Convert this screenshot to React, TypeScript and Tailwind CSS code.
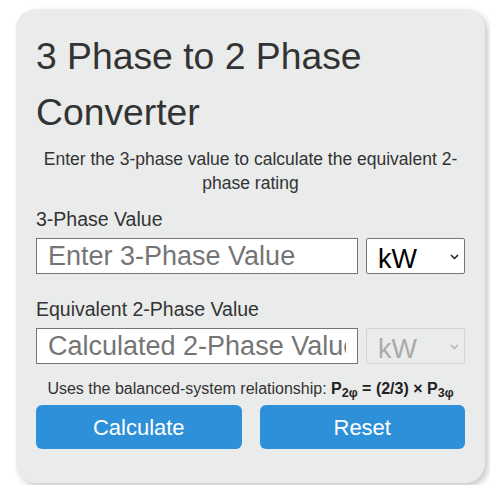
import { useState } from "react";

const font = { fontFamily: '"Liberation Sans", Arial, sans-serif' };

function Chevron({ muted }: { muted?: boolean }) {
	return (
		<svg
			viewBox="0 0 10 6"
			className="pointer-events-none absolute right-[6px] top-1/2 h-[6px] w-[9px] -translate-y-1/2"
			fill="none"
			stroke={muted ? "#b5b5b5" : "#222"}
			strokeWidth={1.6}
			strokeLinecap="round"
			strokeLinejoin="round"
		>
			<path d="M1.5 1.2 5 4.6 8.5 1.2" />
		</svg>
	);
}

export default function App() {
	const [value, setValue] = useState("");
	const [result, setResult] = useState("");

	const calculate = () => {
		const n = parseFloat(value);
		if (Number.isNaN(n)) return;
		setResult(((2 / 3) * n).toFixed(3));
	};

	const reset = () => {
		setValue("");
		setResult("");
	};

	return (
		<div className="min-h-[485px] bg-white pl-[16px] pt-[9px]" style={font}>
			<main className="flex h-[474px] w-[469px] flex-col rounded-[20px] bg-[#eaebeb] px-[20px] pt-[19px] text-[#333] shadow-[3px_3px_6px_rgba(0,0,0,0.22)]">
				<h1 className="text-[37.3px] leading-[56px] font-normal text-[#333]">
					3 Phase to 2 Phase Converter
				</h1>

				<p className="mt-[7px] text-center text-[17.5px] leading-[24px]">
					Enter the 3-phase value to calculate the equivalent 2-phase rating
				</p>

				<label className="mt-[12px] text-[19.5px] leading-[24px]">3-Phase Value</label>
				<div className="mt-[7px] flex gap-[8px]">
					<input
						value={value}
						onChange={(e) => setValue(e.target.value)}
						placeholder="Enter 3-Phase Value"
						className="h-[36px] w-[322px] border border-[#767676] bg-white px-[11px] text-[27px] text-[#111] placeholder:text-[#757575] outline-none"
						style={font}
					/>
					<div className="relative w-[100px]">
						<select
							className="h-[36px] w-full appearance-none rounded-[2px] border border-[#767676] bg-white pl-[11px] text-[27px] text-black outline-none"
							style={font}
						>
							<option>kW</option>
							<option>W</option>
							<option>MW</option>
						</select>
						<Chevron />
					</div>
				</div>

				<label className="mt-[22px] text-[19.5px] leading-[24px]">
					Equivalent 2-Phase Value
				</label>
				<div className="mt-[7px] flex gap-[8px]">
					<input
						readOnly
						value={result}
						placeholder="Calculated 2-Phase Value"
						className="h-[36px] w-[322px] border border-[#767676] bg-white px-[11px] text-[27px] text-[#111] placeholder:text-[#757575] outline-none"
						style={font}
					/>
					<div className="relative w-[100px]">
						<select
							disabled
							className="h-[36px] w-full appearance-none rounded-[2px] border border-[#d4d4d4] bg-transparent pl-[11px] text-[27px] text-[#aaa] outline-none"
							style={font}
						>
							<option>kW</option>
						</select>
						<Chevron muted />
					</div>
				</div>

				<p className="mt-[13px] whitespace-nowrap text-center text-[16px] leading-[22px] text-[#333]">
					Uses the balanced-system relationship:{" "}
					<b className="text-[#222]">
						P<sub className="text-[12.5px]">2φ</sub> = (2/3) × P
						<sub className="text-[12.5px]">3φ</sub>
					</b>
				</p>

				<section className="mt-[5px] flex gap-[18px]">
					<button
						type="button"
						onClick={calculate}
						className="h-[44px] flex-1 rounded-[6px] bg-[#2d90d8] text-[22px] text-white"
						style={font}
					>
						Calculate
					</button>
					<button
						type="button"
						onClick={reset}
						className="h-[44px] flex-1 rounded-[6px] bg-[#2d90d8] text-[22px] text-white"
						style={font}
					>
						Reset
					</button>
				</section>
			</main>
		</div>
	);
}
